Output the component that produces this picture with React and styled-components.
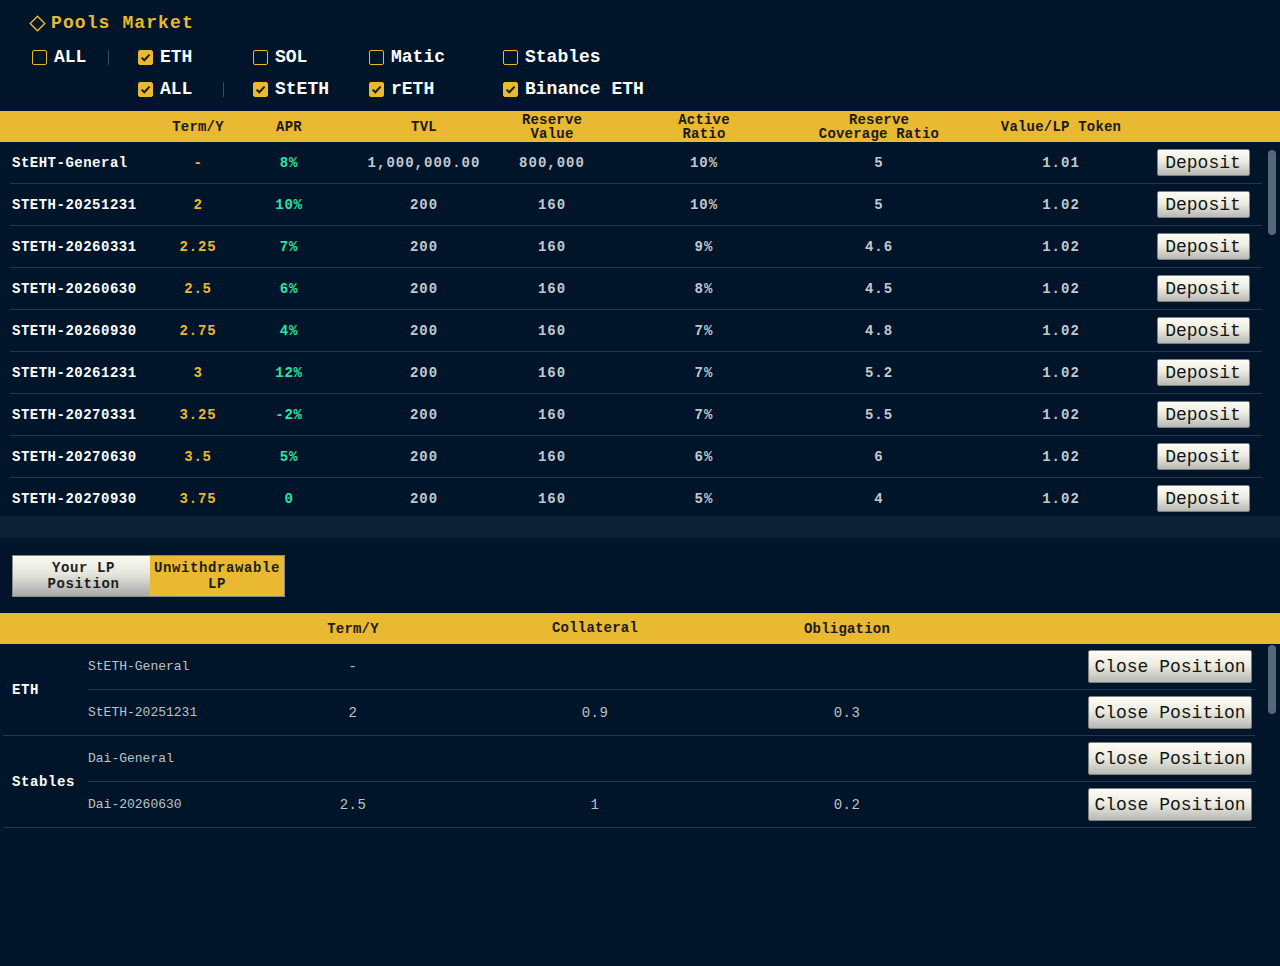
import React from 'react';
import styled, { createGlobalStyle } from 'styled-components';

const GOLD = '#e8b931';
const LINE = '#26374b';

const GlobalStyle = createGlobalStyle`
    html, body {
        margin: 0;
        padding: 0;
        background: #001529;
    }
    * {
        box-sizing: border-box;
    }
`;

const POOL_COLS = '150px 76px 106px 164px 92px 212px 138px 226px 58px 1fr';
const POS_COLS = '212px 106px 378px 126px 1fr';

const pools = [
    ['StEHT-General', '-', '8%', '1,000,000.00', '800,000', '10%', '5', '1.01'],
    ['STETH-20251231', '2', '10%', '200', '160', '10%', '5', '1.02'],
    ['STETH-20260331', '2.25', '7%', '200', '160', '9%', '4.6', '1.02'],
    ['STETH-20260630', '2.5', '6%', '200', '160', '8%', '4.5', '1.02'],
    ['STETH-20260930', '2.75', '4%', '200', '160', '7%', '4.8', '1.02'],
    ['STETH-20261231', '3', '12%', '200', '160', '7%', '5.2', '1.02'],
    ['STETH-20270331', '3.25', '-2%', '200', '160', '7%', '5.5', '1.02'],
    ['STETH-20270630', '3.5', '5%', '200', '160', '6%', '6', '1.02'],
    ['STETH-20270930', '3.75', '0', '200', '160', '5%', '4', '1.02'],
];

const positions = [
    {
        group: 'ETH',
        items: [
            ['StETH-General', '-', '', ''],
            ['StETH-20251231', '2', '0.9', '0.3'],
        ],
    },
    {
        group: 'Stables',
        items: [
            ['Dai-General', '', '', ''],
            ['Dai-20260630', '2.5', '1', '0.2'],
        ],
    },
];

const Diamond = () => (
    <svg width="17" height="17" viewBox="0 0 17 17">
        <polygon points="8.5,1.2 15.8,8.5 8.5,15.8 1.2,8.5" fill="none" stroke={GOLD} strokeWidth="1.4" />
    </svg>
);

const Check = ({ checked, label }) => (
    <CheckLabel>
        <Box $checked={checked}>
            {checked && (
                <svg width="13" height="13" viewBox="0 0 13 13">
                    <path d="M2.6 6.6 L5.3 9.3 L10.6 3.6" fill="none" stroke="#1b1b1b" strokeWidth="2" />
                </svg>
            )}
        </Box>
        {label}
    </CheckLabel>
);

const App = () => {
    return (
        <Page>
            <GlobalStyle />
            <Title>
                <Diamond />
                Pools Market
            </Title>

            <Filters>
                <FilterRow>
                    <Cell>
                        <Check label="ALL" />
                        <Divider />
                    </Cell>
                    <Cell><Check checked label="ETH" /></Cell>
                    <Cell><Check label="SOL" /></Cell>
                    <Cell><Check label="Matic" /></Cell>
                    <Cell><Check label="Stables" /></Cell>
                </FilterRow>
                <FilterRow>
                    <Cell />
                    <Cell>
                        <Check checked label="ALL" />
                        <Divider />
                    </Cell>
                    <Cell><Check checked label="StETH" /></Cell>
                    <Cell><Check checked label="rETH" /></Cell>
                    <Cell><Check checked label="Binance ETH" /></Cell>
                </FilterRow>
            </Filters>

            <PoolsHead>
                <HeadCell />
                <HeadCell>Term/Y</HeadCell>
                <HeadCell>APR</HeadCell>
                <HeadCell>TVL</HeadCell>
                <HeadCell>Reserve<br />Value</HeadCell>
                <HeadCell>Active<br />Ratio</HeadCell>
                <HeadCell>Reserve<br />Coverage Ratio</HeadCell>
                <HeadCell>Value/LP Token</HeadCell>
                <HeadCell />
            </PoolsHead>

            <PoolsArea>
                <ScrollBody>
                    {pools.map((r) => (
                        <PoolRow key={r[0]}>
                            <Value $tone="name" $left>{r[0]}</Value>
                            <Value $tone="term">{r[1]}</Value>
                            <Value $tone="apr">{r[2]}</Value>
                            <Value>{r[3]}</Value>
                            <Value>{r[4]}</Value>
                            <Value>{r[5]}</Value>
                            <Value>{r[6]}</Value>
                            <Value>{r[7]}</Value>
                            <Value>
                                <ActionButton>Deposit</ActionButton>
                            </Value>
                        </PoolRow>
                    ))}
                </ScrollBody>
                <Track>
                    <Thumb $top={8} $size={85} />
                </Track>
            </PoolsArea>
            <Band />

            <Tabs>
                <Tab>Your LP<br />Position</Tab>
                <Tab $active>Unwithdrawable<br />LP</Tab>
            </Tabs>

            <PosHead>
                <HeadCell />
                <HeadCell>Term/Y</HeadCell>
                <HeadCell $raise>Collateral</HeadCell>
                <HeadCell>Obligation</HeadCell>
                <HeadCell />
            </PosHead>

            <PosArea>
                <ScrollBody>
                    <PosList>
                        {positions.map((g) => (
                            <Group key={g.group}>
                                <GroupLabel>{g.group}</GroupLabel>
                                <SubRows>
                                    {g.items.map((it) => (
                                        <SubRow key={it[0]}>
                                            <PosValue $left $name>{it[0]}</PosValue>
                                            <PosValue>{it[1]}</PosValue>
                                            <PosValue>{it[2]}</PosValue>
                                            <PosValue>{it[3]}</PosValue>
                                            <PosValue $right>
                                                <ActionButton $wide>Close Position</ActionButton>
                                            </PosValue>
                                        </SubRow>
                                    ))}
                                </SubRows>
                            </Group>
                        ))}
                    </PosList>
                </ScrollBody>
                <Track>
                    <Thumb $top={1} $size={69} />
                </Track>
            </PosArea>
        </Page>
    );
};

const Page = styled.div`
    height: 100vh;
    display: flex;
    flex-direction: column;
    overflow: hidden;
    background: #001529;
    font-family: "Liberation Mono", "Courier New", monospace;
`;

const Title = styled.h1`
    margin: 0;
    padding: 12px 0 0 29px;
    height: 34px;
    display: flex;
    align-items: center;
    gap: 5px;
    font-size: 18px;
    line-height: 22px;
    font-weight: 700;
    letter-spacing: 1.1px;
    color: ${GOLD};
`;

const Filters = styled.div`
    padding: 7px 0 0 32px;
    display: flex;
    flex-direction: column;
    margin-bottom: 6px;
`;

const FilterRow = styled.div`
    display: grid;
    grid-template-columns: 106px 115px 116px 134px auto;
    height: 32px;
    align-items: center;
`;

const Cell = styled.div`
    display: flex;
    align-items: center;
`;

const CheckLabel = styled.label`
    display: flex;
    align-items: center;
    gap: 7px;
    font-size: 18px;
    font-weight: 700;
    color: #ffffff;
    white-space: nowrap;
`;

const Box = styled.span`
    width: 15px;
    height: 15px;
    border: 1.5px solid ${GOLD};
    border-radius: 2px;
    background: ${(p) => (p.$checked ? GOLD : 'transparent')};
    display: flex;
    align-items: center;
    justify-content: center;
`;

const Divider = styled.span`
    width: 1px;
    height: 15px;
    background: #3a4a5d;
    margin-left: auto;
    margin-right: 29px;
`;

const PoolsHead = styled.div`
    display: grid;
    grid-template-columns: ${POOL_COLS};
    height: 31px;
    padding: 1px 18px 0 10px;
    background: ${GOLD};
`;

const HeadCell = styled.div`
    display: flex;
    align-items: center;
    justify-content: center;
    text-align: center;
    white-space: nowrap;
    font-size: 14px;
    line-height: 14px;
    font-weight: 700;
    letter-spacing: 0.2px;
    color: #1c1a14;
    padding-bottom: ${(p) => (p.$raise ? '3px' : '0')};
`;

const PoolsArea = styled.div`
    display: flex;
    height: 374px;
    flex-shrink: 0;
`;

const ScrollBody = styled.div`
    flex: 1;
    min-width: 0;
    overflow-y: auto;
    scrollbar-width: none;
`;

const Track = styled.div`
    width: 16px;
    flex-shrink: 0;
    padding-left: 4px;
`;

const Thumb = styled.div`
    width: 8px;
    height: ${(p) => p.$size}px;
    margin-top: ${(p) => p.$top}px;
    border-radius: 4px;
    background: #56677a;
`;

const PoolRow = styled.div`
    display: grid;
    grid-template-columns: ${POOL_COLS};
    height: 42px;
    margin: 0 2px 0 10px;
    border-bottom: 1px solid ${LINE};
`;

const tones = {
    name: '#ffffff',
    term: GOLD,
    apr: '#2ee3a7',
};

const Value = styled.div`
    display: flex;
    align-items: center;
    justify-content: ${(p) => (p.$left ? 'flex-start' : 'center')};
    padding-left: ${(p) => (p.$left ? '2px' : '0')};
    white-space: nowrap;
    font-size: 14px;
    font-weight: 700;
    letter-spacing: ${(p) => (p.$tone === 'name' ? '0.5px' : p.$tone ? '0.8px' : '1px')};
    color: ${(p) => tones[p.$tone] || '#c3c8cf'};
`;

const ActionButton = styled.button`
    width: ${(p) => (p.$wide ? '164px' : '93px')};
    height: ${(p) => (p.$wide ? '33px' : '27px')};
    padding: 0;
    border: 1px solid #7f7f7f;
    border-radius: 2px;
    background: linear-gradient(#fdfdf3 0%, #ecece2 45%, #b8b9b4 100%);
    box-shadow: inset 0 1px 0 #ffffff;
    font-family: "Liberation Mono", "Courier New", monospace;
    font-size: 18px;
    color: #141414;
    cursor: pointer;
    flex-shrink: 0;
`;

const Band = styled.div`
    height: 22px;
    flex-shrink: 0;
    background: #0d1f34;
`;

const Tabs = styled.div`
    display: flex;
    align-self: flex-start;
    margin: 17px 0 0 12px;
    border: 1px solid #8a8a8a;
`;

const Tab = styled.div`
    width: ${(p) => (p.$active ? '134px' : '137px')};
    height: 40px;
    display: flex;
    align-items: center;
    justify-content: center;
    text-align: center;
    padding-left: ${(p) => (p.$active ? '0' : '4px')};
    font-size: 14px;
    line-height: 16px;
    font-weight: 700;
    letter-spacing: 0.6px;
    color: #1d1d1d;
    background: ${(p) => (p.$active ? GOLD : 'linear-gradient(#fbfbf0 0%, #e4e5dc 45%, #a8aaa9 100%)')};
`;

const PosHead = styled.div`
    display: grid;
    grid-template-columns: ${POS_COLS};
    height: 31px;
    flex-shrink: 0;
    margin-top: 16px;
    padding: 1px 0 0 88px;
    background: ${GOLD};
`;

const PosArea = styled.div`
    flex: 1;
    min-height: 0;
    display: flex;
`;

const PosList = styled.div`
    margin: 0 9px 0 3px;
`;

const Group = styled.div`
    display: flex;
    border-bottom: 1px solid ${LINE};
`;

const GroupLabel = styled.div`
    width: 85px;
    flex-shrink: 0;
    display: flex;
    align-items: center;
    padding-left: 9px;
    font-size: 14px;
    font-weight: 700;
    letter-spacing: 0.6px;
    color: #ffffff;
`;

const SubRows = styled.div`
    flex: 1;
    display: flex;
    flex-direction: column;
`;

const SubRow = styled.div`
    display: grid;
    grid-template-columns: ${POS_COLS};
    height: 45px;

    & + & {
        border-top: 1px solid ${LINE};
        height: 46px;
    }
`;

const PosValue = styled.div`
    display: flex;
    align-items: center;
    justify-content: ${(p) => (p.$left ? 'flex-start' : p.$right ? 'flex-end' : 'center')};
    padding-right: ${(p) => (p.$right ? '3px' : '0')};
    white-space: nowrap;
    font-size: ${(p) => (p.$name ? '13px' : '14px')};
    letter-spacing: ${(p) => (p.$name ? '0' : '0.4px')};
    color: #bcc2ca;
`;

export default App;
